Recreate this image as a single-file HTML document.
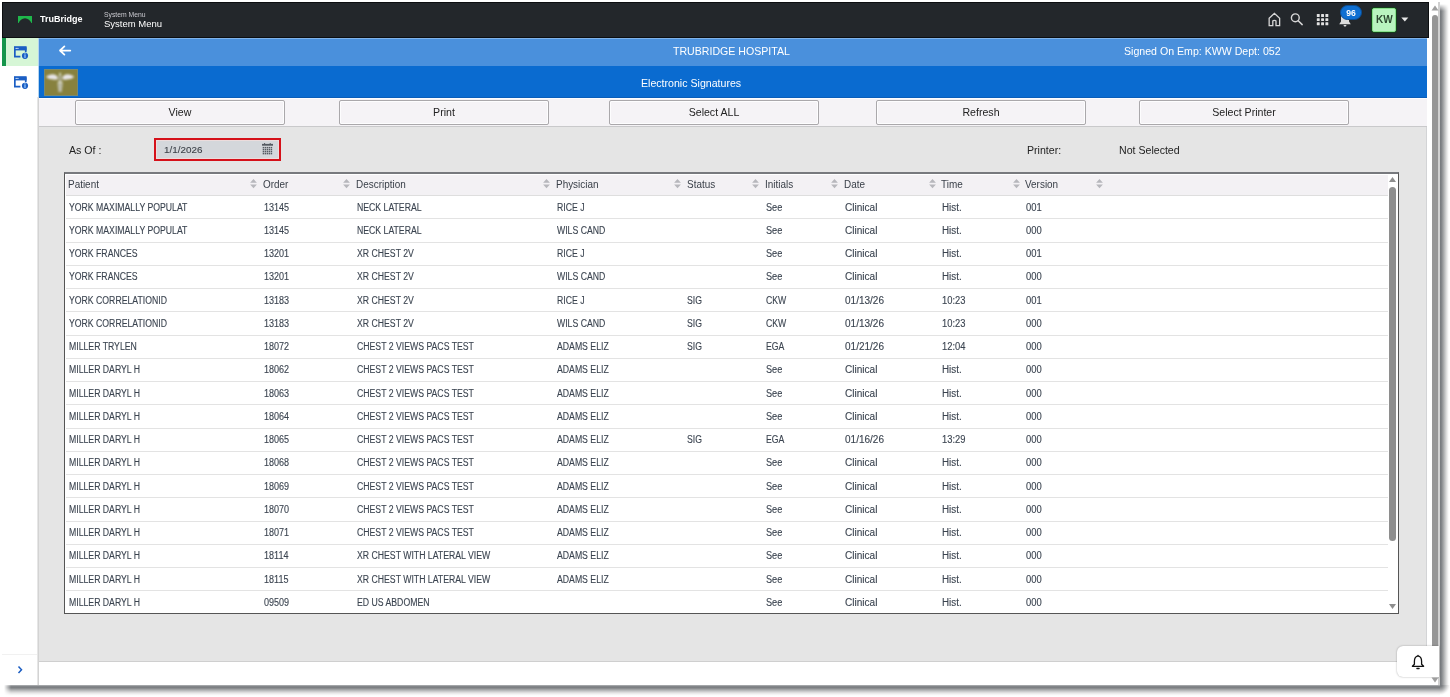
<!DOCTYPE html>
<html><head><meta charset="utf-8">
<style>
*{box-sizing:border-box;margin:0;padding:0}
html,body{width:1450px;height:697px;overflow:hidden;background:#fff;font-family:"Liberation Sans",sans-serif}
body{will-change:transform}
div,span,svg{position:absolute}
#win{left:2px;top:2px;width:1438px;height:683px;background:#fff}
#shr{left:1440px;top:4px;width:10px;height:681px;background:linear-gradient(to right,#76797d 0px,#7d8084 1.2px,#9c9ea0 3px,#c2c3c4 5px,#e6e6e6 7px,#fafafa 8.5px,#fff 9.5px);-webkit-mask-image:linear-gradient(to bottom,transparent 0px,#000 7px)}
#shb{left:4px;top:685px;width:1436px;height:12px;background:linear-gradient(to bottom,#b8babc 0px,#8e9194 1px,#76797d 2px,#85888b 3.2px,#9c9ea0 4.2px,#c2c3c4 6px,#e6e6e6 8px,#fafafa 10px,#fff 11px);-webkit-mask-image:linear-gradient(to right,transparent 0px,#000 7px)}
#shc{left:1440px;top:685px;width:10px;height:12px;background:radial-gradient(circle at 0 0,#76797d 0px,#7d8084 2px,#9c9ea0 4px,#c2c3c4 6px,#e6e6e6 8px,#fafafa 9.5px,#fff 10.5px)}
#hdr{left:2px;top:2px;width:1427px;height:36px;background:#23272b;border:1px solid #0c0e10}
#side{left:2px;top:38px;width:37px;height:647px;background:#fff;border-right:1px solid #d3d3d3}
#sl2{left:37px;top:97px;width:1px;height:588px;background:#e6e6e6}
#sl3{left:38px;top:38px;width:1px;height:59px;background:#b4d4f0}
#sline{left:2px;top:654px;width:35px;height:1px;background:#f1f1f1}
#act{left:2px;top:38px;width:36px;height:28px;background:#d6f6d6;border-left:4px solid #15954b}
#main{left:39px;top:38px;width:1388px;height:624px;background:#e5e5e5;border-bottom:1px solid #cfcfcf;border-right:1px solid #d3d4d6}
#bar1{left:39px;top:38px;width:1388px;height:28px;background:#4a90dc;border-top:1px solid #7fb3ea}
#bar2{left:39px;top:66px;width:1388px;height:32px;background:#0a6bd0;border-bottom:1px solid #0a5db8}
#tb{left:39px;top:98px;width:1388px;height:29px;background:#f5f3f6;border-top:1px solid #fdfdff;border-bottom:1px solid #c9c9cb}
.btn{top:100px;height:25px;width:210px;border:1px solid #aaa8ab;border-radius:2px;background:#f5f3f6;box-shadow:inset 0 0 0 1px #fdfdfe;font-size:10.6px;color:#222;text-align:center;line-height:23px}
.w{color:#fff;font-size:10.6px;white-space:nowrap;line-height:12px}
.lbl{font-size:10.6px;color:#222;white-space:nowrap;line-height:12px}
#date{left:154px;top:138px;width:127px;height:23px;border:2.6px solid #d5111a;background:#d4d7db;box-shadow:inset 0 0 0 1px #ecdcdc}
#datetxt{left:164px;top:143.7px;font-size:9.5px;color:#3a3f46;line-height:12px;transform:scaleX(1.04);transform-origin:0 0;-webkit-text-stroke:.1px #3a3f46}
#tbl{left:64px;top:172px;width:1335px;height:442px;border:1px solid #555;border-width:2px 1px 1px 1px;border-top-color:#77797d;background:#fff}
#th{left:66px;top:175px;width:1322px;height:21px;background:#f3f1f4;border-bottom:1px solid #dedede}
.hc{top:177.8px;line-height:14px;font-size:10.3px;color:#3a4049;white-space:nowrap;transform:scaleX(.965);transform-origin:0 0}
.rl{left:66px;width:1322px;height:1px;background:#e3e3e3}
.c{line-height:22px;font-size:10.0px;color:#3b4450;white-space:nowrap;transform-origin:0 50%;-webkit-text-stroke:.12px #3b4450}
#sb{left:1430px;top:2px;width:10px;height:683px;background:#fff;border-right:2px solid #d0d0d0}
#sbt{left:1432px;top:15px;width:6px;height:640px;background:#969696;border-radius:3px}
#isbt{left:1389px;top:187px;width:7px;height:354px;background:#8e8e8e;border-radius:3.5px}
#bellw{left:1397px;top:646px;width:42px;height:31px;background:#fff;border-radius:6px 0 0 6px;box-shadow:0 0 2px rgba(0,0,0,.35)}
</style></head><body>
<div id="win"></div>
<div id="shr"></div>
<div id="shb"></div>
<div id="shc"></div>
<div id="hdr"></div>
<div id="side"></div>
<div id="sline"></div>
<div id="sl2"></div>
<div id="sl3"></div>
<div id="act"></div>
<div id="main"></div>
<div id="bar1"></div>
<div id="bar2"></div>
<div id="tb"></div>
<div id="sb"></div>
<div id="sbt"></div>
<svg style="left:1431px;top:5px" width="8" height="6" viewBox="0 0 8 6"><path d="M4 0.5 L7.5 5.5 L0.5 5.5Z" fill="#a0a0a0"/></svg>
<svg style="left:1431px;top:677px" width="8" height="6" viewBox="0 0 8 6"><path d="M0.5 0.5 L7.5 0.5 L4 5.5Z" fill="#a0a0a0"/></svg>

<!-- header content -->
<svg style="left:17px;top:15px" width="16" height="9" viewBox="0 0 16 9"><path d="M1 1 H15 V8 H14.4 C13.4 5.2 11 3.4 8 3.2 C5 3.4 2.6 5.2 1.6 8 H1Z" fill="#1fb84b"/></svg>
<div style="left:40px;top:13px;font-size:9.7px;font-weight:bold;color:#fff;white-space:nowrap;line-height:12px;transform:scaleX(.93);transform-origin:0 0">TruBridge</div>
<div style="left:104px;top:10.5px;font-size:6.8px;color:#c9c9cf;white-space:nowrap;line-height:8px">System Menu</div>
<div style="left:104px;top:17.5px;font-size:9.5px;color:#fff;white-space:nowrap;line-height:11px">System Menu</div>
<svg style="left:1268px;top:12px" width="14" height="16" viewBox="0 0 14 16"><path d="M1.15 6.3 L6.4 1.3 L11.65 6.3 V13.6 H8 V8.9 C7.5 8.2 5.3 8.2 4.8 8.9 V13.6 H1.15Z" fill="none" stroke="#d6d6d6" stroke-width="1.3" stroke-linejoin="miter"/></svg>
<svg style="left:1289px;top:12px" width="15" height="15" viewBox="0 0 15 15"><circle cx="6.3" cy="5.8" r="3.9" fill="none" stroke="#d6d6d6" stroke-width="1.4"/><path d="M9.2 8.8 L13.2 12.6" stroke="#d6d6d6" stroke-width="1.5" stroke-linecap="round"/></svg>
<svg style="left:1316px;top:13px" width="13" height="13" viewBox="0 0 13 13"><g fill="#e2e2e2"><rect x="0.8" y="1" width="2.9" height="2.9" rx=".5"/><rect x="5.1" y="1" width="2.9" height="2.9" rx=".5"/><rect x="9.4" y="1" width="2.9" height="2.9" rx=".5"/><rect x="0.8" y="5.2" width="2.9" height="2.9" rx=".5"/><rect x="5.1" y="5.2" width="2.9" height="2.9" rx=".5"/><rect x="9.4" y="5.2" width="2.9" height="2.9" rx=".5"/><rect x="0.8" y="9.3" width="2.9" height="2.9" rx=".5"/><rect x="5.1" y="9.3" width="2.9" height="2.9" rx=".5"/><rect x="9.4" y="9.3" width="2.9" height="2.9" rx=".5"/></g></svg>
<svg style="left:1338px;top:12px" width="14" height="16" viewBox="0 0 14 16"><path d="M7 1.5 C4 1.5 3 4 3 6.5 V9.5 L1.2 12.3 H12.8 L11 9.5 V6.5 C11 4 10 1.5 7 1.5Z M5.6 13 H8.4 C8.4 14.2 7.8 14.6 7 14.6 C6.2 14.6 5.6 14.2 5.6 13Z" fill="#dcdcdc"/></svg>
<div style="left:1340px;top:5px;width:22px;height:15px;border-radius:7.5px;background:#0e6fd2;border:1px solid #0a4e96"></div>
<div style="left:1340px;top:7.8px;width:22px;text-align:center;font-size:8.6px;font-weight:bold;color:#fff;line-height:10px">96</div>
<div style="left:1372px;top:7.5px;width:24px;height:24px;background:#b9f4bf;border:1.5px solid #86e08a;border-radius:2px;box-shadow:0 0 0 1px #14401a"></div>
<div style="left:1372px;top:13.5px;width:24.5px;text-align:center;font-size:10px;font-weight:bold;color:#2d4a31;line-height:12px">KW</div>
<svg style="left:1400px;top:16px" width="10" height="7" viewBox="0 0 10 7"><path d="M1.3 1.6 H8.3 L4.8 5.6Z" fill="#e8e8e8"/></svg>

<!-- sidebar icons -->
<svg style="left:13px;top:46px" width="16" height="15" viewBox="0 0 16 15"><path d="M12.75 1.2 V6.2 M1.85 1.2 V10.65 H7.4" fill="none" stroke="#1b5ec4" stroke-width="1.7"/><rect x="1" y="0.2" width="12.6" height="4.2" fill="#1b5ec4"/><circle cx="3.2" cy="2.4" r=".65" fill="#e6f3ff"/><circle cx="4.9" cy="2.4" r=".65" fill="#e6f3ff"/><circle cx="12" cy="9.8" r="3.1" fill="#1b5ec4"/><rect x="11.45" y="8.4" width="1.1" height="3.6" fill="#9fd0ff"/><circle cx="12" cy="7.6" r=".55" fill="#9fd0ff"/></svg>
<svg style="left:13px;top:76px" width="16" height="15" viewBox="0 0 16 15"><path d="M12.75 1.2 V6.2 M1.85 1.2 V10.65 H7.4" fill="none" stroke="#1b5ec4" stroke-width="1.7"/><rect x="1" y="0.2" width="12.6" height="4.2" fill="#1b5ec4"/><circle cx="3.2" cy="2.4" r=".65" fill="#e6f3ff"/><circle cx="4.9" cy="2.4" r=".65" fill="#e6f3ff"/><circle cx="12" cy="9.8" r="3.1" fill="#1b5ec4"/><rect x="11.45" y="8.4" width="1.1" height="3.6" fill="#9fd0ff"/><circle cx="12" cy="7.6" r=".55" fill="#9fd0ff"/></svg>
<svg style="left:16px;top:664px" width="8" height="11" viewBox="0 0 8 11"><path d="M2.5 2.5 L5.5 5.7 L2.5 8.9" fill="none" stroke="#1a5cc2" stroke-width="1.5"/></svg>

<!-- blue bars content -->
<svg style="left:57px;top:43px" width="16" height="15" viewBox="0 0 16 15"><path d="M7.4 3.4 L3 7.5 L7.4 11.6 M3.5 7.5 H13.3" fill="none" stroke="#fff" stroke-width="1.75" stroke-linecap="round" stroke-linejoin="round"/></svg>
<div class="w" style="left:673px;top:45px">TRUBRIDGE HOSPITAL</div>
<div class="w" style="left:1124px;top:45px">Signed On Emp: KWW Dept: 052</div>
<div style="left:44px;top:69px;width:34px;height:27px;background:#87813e;border:1px solid #788a72"></div>
<svg style="left:44px;top:69px" width="34" height="27" viewBox="0 0 34 27"><defs><filter id="bl" x="-20%" y="-20%" width="140%" height="140%"><feGaussianBlur stdDeviation="0.85"/></filter></defs><g filter="url(#bl)"><path d="M2 8 C4 6.2 7 5.2 9.6 5.4 C11.8 5.7 13.4 6.8 13.6 8.3 L13.6 10.6 C10 11 5 10.3 2 8Z" fill="#e8e6ea"/><path d="M30.2 8 C28.2 6.2 25.2 5.2 22.6 5.4 C20.4 5.7 18.8 6.8 18.6 8.3 L18.6 10.6 C22.2 11 27.2 10.3 30.2 8Z" fill="#e8e6ea"/><ellipse cx="16.1" cy="5" rx="1.1" ry="1.3" fill="#d6dcbc"/><rect x="14.7" y="6" width="2.8" height="7" fill="#aeae96"/><ellipse cx="16.1" cy="13.6" rx="2.7" ry="1" fill="#e2e2d2"/><path d="M13.4 14.6 L18.8 14.6 L17.7 22.9 L14.5 22.9Z" fill="#bcbcaa"/></g></svg>
<div class="w" style="left:641px;top:77px">Electronic Signatures</div>

<!-- buttons -->
<div class="btn" style="left:75px">View</div>
<div class="btn" style="left:339px">Print</div>
<div class="btn" style="left:609px">Select ALL</div>
<div class="btn" style="left:876px">Refresh</div>
<div class="btn" style="left:1139px">Select Printer</div>

<!-- labels -->
<div class="lbl" style="left:69px;top:144px">As Of :</div>
<div id="date"></div>
<div id="datetxt">1/1/2026</div>
<svg style="left:262px;top:142px" width="12" height="14" viewBox="0 0 12 14"><g fill="#555a62"><rect x="0" y="1.9" width="11" height="1.8"/><rect x="2.1" y="1" width="1" height="1.2"/><rect x="7.7" y="1" width="1" height="1.2"/><rect x="0.7" y="4.9" width="1.45" height="1.45"/><rect x="0.7" y="6.9" width="1.45" height="1.45"/><rect x="0.7" y="8.9" width="1.45" height="1.45"/><rect x="0.7" y="10.9" width="1.45" height="1.45"/><rect x="2.7" y="4.9" width="1.45" height="1.45"/><rect x="2.7" y="6.9" width="1.45" height="1.45"/><rect x="2.7" y="8.9" width="1.45" height="1.45"/><rect x="2.7" y="10.9" width="1.45" height="1.45"/><rect x="4.7" y="4.9" width="1.45" height="1.45"/><rect x="4.7" y="6.9" width="1.45" height="1.45"/><rect x="4.7" y="8.9" width="1.45" height="1.45"/><rect x="4.7" y="10.9" width="1.45" height="1.45"/><rect x="6.7" y="4.9" width="1.45" height="1.45"/><rect x="6.7" y="6.9" width="1.45" height="1.45"/><rect x="6.7" y="8.9" width="1.45" height="1.45"/><rect x="6.7" y="10.9" width="1.45" height="1.45"/><rect x="8.7" y="4.9" width="1.45" height="1.45"/><rect x="8.7" y="6.9" width="1.45" height="1.45"/><rect x="8.7" y="8.9" width="1.45" height="1.45"/><rect x="8.7" y="10.9" width="1.45" height="1.45"/></g></svg>
<div class="lbl" style="left:1027px;top:144px">Printer:</div>
<div class="lbl" style="left:1119px;top:144px">Not Selected</div>

<!-- table -->
<div id="tbl"></div>
<div id="th"></div>
<div class="hc" style="left:68.2px">Patient</div>
<div class="hc" style="left:262.8px">Order</div>
<div class="hc" style="left:356.2px">Description</div>
<div class="hc" style="left:555.9px">Physician</div>
<div class="hc" style="left:686.5px">Status</div>
<div class="hc" style="left:765.1px">Initials</div>
<div class="hc" style="left:843.7px">Date</div>
<div class="hc" style="left:941.4px">Time</div>
<div class="hc" style="left:1024.9px">Version</div>
<svg class="si" style="left:250.3px;top:178px" width="7" height="11" viewBox="0 0 7 11"><path d="M3.5 1.1 L6.9 4.8 L0.1 4.8Z M0.1 6.5 L6.9 6.5 L3.5 10.3Z" fill="#b7b7bc"/></svg>
<svg class="si" style="left:343.4px;top:178px" width="7" height="11" viewBox="0 0 7 11"><path d="M3.5 1.1 L6.9 4.8 L0.1 4.8Z M0.1 6.5 L6.9 6.5 L3.5 10.3Z" fill="#b7b7bc"/></svg>
<svg class="si" style="left:543.2px;top:178px" width="7" height="11" viewBox="0 0 7 11"><path d="M3.5 1.1 L6.9 4.8 L0.1 4.8Z M0.1 6.5 L6.9 6.5 L3.5 10.3Z" fill="#b7b7bc"/></svg>
<svg class="si" style="left:673.5px;top:178px" width="7" height="11" viewBox="0 0 7 11"><path d="M3.5 1.1 L6.9 4.8 L0.1 4.8Z M0.1 6.5 L6.9 6.5 L3.5 10.3Z" fill="#b7b7bc"/></svg>
<svg class="si" style="left:752.2px;top:178px" width="7" height="11" viewBox="0 0 7 11"><path d="M3.5 1.1 L6.9 4.8 L0.1 4.8Z M0.1 6.5 L6.9 6.5 L3.5 10.3Z" fill="#b7b7bc"/></svg>
<svg class="si" style="left:831.2px;top:178px" width="7" height="11" viewBox="0 0 7 11"><path d="M3.5 1.1 L6.9 4.8 L0.1 4.8Z M0.1 6.5 L6.9 6.5 L3.5 10.3Z" fill="#b7b7bc"/></svg>
<svg class="si" style="left:928.6px;top:178px" width="7" height="11" viewBox="0 0 7 11"><path d="M3.5 1.1 L6.9 4.8 L0.1 4.8Z M0.1 6.5 L6.9 6.5 L3.5 10.3Z" fill="#b7b7bc"/></svg>
<svg class="si" style="left:1012.6px;top:178px" width="7" height="11" viewBox="0 0 7 11"><path d="M3.5 1.1 L6.9 4.8 L0.1 4.8Z M0.1 6.5 L6.9 6.5 L3.5 10.3Z" fill="#b7b7bc"/></svg>
<svg class="si" style="left:1096.1px;top:178px" width="7" height="11" viewBox="0 0 7 11"><path d="M3.5 1.1 L6.9 4.8 L0.1 4.8Z M0.1 6.5 L6.9 6.5 L3.5 10.3Z" fill="#b7b7bc"/></svg>
<div class="rl" style="top:218.45px"></div>
<div class="rl" style="top:241.70px"></div>
<div class="rl" style="top:264.95px"></div>
<div class="rl" style="top:288.20px"></div>
<div class="rl" style="top:311.45px"></div>
<div class="rl" style="top:334.70px"></div>
<div class="rl" style="top:357.95px"></div>
<div class="rl" style="top:381.20px"></div>
<div class="rl" style="top:404.45px"></div>
<div class="rl" style="top:427.70px"></div>
<div class="rl" style="top:450.95px"></div>
<div class="rl" style="top:474.20px"></div>
<div class="rl" style="top:497.45px"></div>
<div class="rl" style="top:520.70px"></div>
<div class="rl" style="top:543.95px"></div>
<div class="rl" style="top:567.20px"></div>
<div class="rl" style="top:590.45px"></div>
<div class="c" style="left:69px;top:196.50px;transform:scaleX(0.8695)">YORK MAXIMALLY POPULAT</div>
<div class="c" style="left:263.6px;top:196.50px;transform:scaleX(0.9024)">13145</div>
<div class="c" style="left:357px;top:196.50px;transform:scaleX(0.8695)">NECK LATERAL</div>
<div class="c" style="left:556.7px;top:196.50px;transform:scaleX(0.8695)">RICE J</div>
<div class="c" style="left:765.9px;top:196.50px;transform:scaleX(0.9118)">See</div>
<div class="c" style="left:844.5px;top:196.50px;transform:scaleX(1.0058)">Clinical</div>
<div class="c" style="left:942.2px;top:196.50px;transform:scaleX(0.9823)">Hist.</div>
<div class="c" style="left:1025.7px;top:196.50px;transform:scaleX(0.94)">001</div>
<div class="c" style="left:69px;top:219.75px;transform:scaleX(0.8695)">YORK MAXIMALLY POPULAT</div>
<div class="c" style="left:263.6px;top:219.75px;transform:scaleX(0.9024)">13145</div>
<div class="c" style="left:357px;top:219.75px;transform:scaleX(0.8695)">NECK LATERAL</div>
<div class="c" style="left:556.7px;top:219.75px;transform:scaleX(0.8695)">WILS CAND</div>
<div class="c" style="left:765.9px;top:219.75px;transform:scaleX(0.9118)">See</div>
<div class="c" style="left:844.5px;top:219.75px;transform:scaleX(1.0058)">Clinical</div>
<div class="c" style="left:942.2px;top:219.75px;transform:scaleX(0.9823)">Hist.</div>
<div class="c" style="left:1025.7px;top:219.75px;transform:scaleX(0.94)">000</div>
<div class="c" style="left:69px;top:243.00px;transform:scaleX(0.8695)">YORK FRANCES</div>
<div class="c" style="left:263.6px;top:243.00px;transform:scaleX(0.9024)">13201</div>
<div class="c" style="left:357px;top:243.00px;transform:scaleX(0.8695)">XR CHEST 2V</div>
<div class="c" style="left:556.7px;top:243.00px;transform:scaleX(0.8695)">RICE J</div>
<div class="c" style="left:765.9px;top:243.00px;transform:scaleX(0.9118)">See</div>
<div class="c" style="left:844.5px;top:243.00px;transform:scaleX(1.0058)">Clinical</div>
<div class="c" style="left:942.2px;top:243.00px;transform:scaleX(0.9823)">Hist.</div>
<div class="c" style="left:1025.7px;top:243.00px;transform:scaleX(0.94)">001</div>
<div class="c" style="left:69px;top:266.25px;transform:scaleX(0.8695)">YORK FRANCES</div>
<div class="c" style="left:263.6px;top:266.25px;transform:scaleX(0.9024)">13201</div>
<div class="c" style="left:357px;top:266.25px;transform:scaleX(0.8695)">XR CHEST 2V</div>
<div class="c" style="left:556.7px;top:266.25px;transform:scaleX(0.8695)">WILS CAND</div>
<div class="c" style="left:765.9px;top:266.25px;transform:scaleX(0.9118)">See</div>
<div class="c" style="left:844.5px;top:266.25px;transform:scaleX(1.0058)">Clinical</div>
<div class="c" style="left:942.2px;top:266.25px;transform:scaleX(0.9823)">Hist.</div>
<div class="c" style="left:1025.7px;top:266.25px;transform:scaleX(0.94)">000</div>
<div class="c" style="left:69px;top:289.50px;transform:scaleX(0.8695)">YORK CORRELATIONID</div>
<div class="c" style="left:263.6px;top:289.50px;transform:scaleX(0.9024)">13183</div>
<div class="c" style="left:357px;top:289.50px;transform:scaleX(0.8695)">XR CHEST 2V</div>
<div class="c" style="left:556.7px;top:289.50px;transform:scaleX(0.8695)">RICE J</div>
<div class="c" style="left:687.3px;top:289.50px;transform:scaleX(0.8695)">SIG</div>
<div class="c" style="left:765.9px;top:289.50px;transform:scaleX(0.8695)">CKW</div>
<div class="c" style="left:844.5px;top:289.50px;transform:scaleX(1.0011)">01/13/26</div>
<div class="c" style="left:942.2px;top:289.50px;transform:scaleX(0.9353)">10:23</div>
<div class="c" style="left:1025.7px;top:289.50px;transform:scaleX(0.94)">001</div>
<div class="c" style="left:69px;top:312.75px;transform:scaleX(0.8695)">YORK CORRELATIONID</div>
<div class="c" style="left:263.6px;top:312.75px;transform:scaleX(0.9024)">13183</div>
<div class="c" style="left:357px;top:312.75px;transform:scaleX(0.8695)">XR CHEST 2V</div>
<div class="c" style="left:556.7px;top:312.75px;transform:scaleX(0.8695)">WILS CAND</div>
<div class="c" style="left:687.3px;top:312.75px;transform:scaleX(0.8695)">SIG</div>
<div class="c" style="left:765.9px;top:312.75px;transform:scaleX(0.8695)">CKW</div>
<div class="c" style="left:844.5px;top:312.75px;transform:scaleX(1.0011)">01/13/26</div>
<div class="c" style="left:942.2px;top:312.75px;transform:scaleX(0.9353)">10:23</div>
<div class="c" style="left:1025.7px;top:312.75px;transform:scaleX(0.94)">000</div>
<div class="c" style="left:69px;top:336.00px;transform:scaleX(0.8695)">MILLER TRYLEN</div>
<div class="c" style="left:263.6px;top:336.00px;transform:scaleX(0.9024)">18072</div>
<div class="c" style="left:357px;top:336.00px;transform:scaleX(0.8695)">CHEST 2 VIEWS PACS TEST</div>
<div class="c" style="left:556.7px;top:336.00px;transform:scaleX(0.8695)">ADAMS ELIZ</div>
<div class="c" style="left:687.3px;top:336.00px;transform:scaleX(0.8695)">SIG</div>
<div class="c" style="left:765.9px;top:336.00px;transform:scaleX(0.8695)">EGA</div>
<div class="c" style="left:844.5px;top:336.00px;transform:scaleX(1.0011)">01/21/26</div>
<div class="c" style="left:942.2px;top:336.00px;transform:scaleX(0.9353)">12:04</div>
<div class="c" style="left:1025.7px;top:336.00px;transform:scaleX(0.94)">000</div>
<div class="c" style="left:69px;top:359.25px;transform:scaleX(0.8695)">MILLER DARYL H</div>
<div class="c" style="left:263.6px;top:359.25px;transform:scaleX(0.9024)">18062</div>
<div class="c" style="left:357px;top:359.25px;transform:scaleX(0.8695)">CHEST 2 VIEWS PACS TEST</div>
<div class="c" style="left:556.7px;top:359.25px;transform:scaleX(0.8695)">ADAMS ELIZ</div>
<div class="c" style="left:765.9px;top:359.25px;transform:scaleX(0.9118)">See</div>
<div class="c" style="left:844.5px;top:359.25px;transform:scaleX(1.0058)">Clinical</div>
<div class="c" style="left:942.2px;top:359.25px;transform:scaleX(0.9823)">Hist.</div>
<div class="c" style="left:1025.7px;top:359.25px;transform:scaleX(0.94)">000</div>
<div class="c" style="left:69px;top:382.50px;transform:scaleX(0.8695)">MILLER DARYL H</div>
<div class="c" style="left:263.6px;top:382.50px;transform:scaleX(0.9024)">18063</div>
<div class="c" style="left:357px;top:382.50px;transform:scaleX(0.8695)">CHEST 2 VIEWS PACS TEST</div>
<div class="c" style="left:556.7px;top:382.50px;transform:scaleX(0.8695)">ADAMS ELIZ</div>
<div class="c" style="left:765.9px;top:382.50px;transform:scaleX(0.9118)">See</div>
<div class="c" style="left:844.5px;top:382.50px;transform:scaleX(1.0058)">Clinical</div>
<div class="c" style="left:942.2px;top:382.50px;transform:scaleX(0.9823)">Hist.</div>
<div class="c" style="left:1025.7px;top:382.50px;transform:scaleX(0.94)">000</div>
<div class="c" style="left:69px;top:405.75px;transform:scaleX(0.8695)">MILLER DARYL H</div>
<div class="c" style="left:263.6px;top:405.75px;transform:scaleX(0.9024)">18064</div>
<div class="c" style="left:357px;top:405.75px;transform:scaleX(0.8695)">CHEST 2 VIEWS PACS TEST</div>
<div class="c" style="left:556.7px;top:405.75px;transform:scaleX(0.8695)">ADAMS ELIZ</div>
<div class="c" style="left:765.9px;top:405.75px;transform:scaleX(0.9118)">See</div>
<div class="c" style="left:844.5px;top:405.75px;transform:scaleX(1.0058)">Clinical</div>
<div class="c" style="left:942.2px;top:405.75px;transform:scaleX(0.9823)">Hist.</div>
<div class="c" style="left:1025.7px;top:405.75px;transform:scaleX(0.94)">000</div>
<div class="c" style="left:69px;top:429.00px;transform:scaleX(0.8695)">MILLER DARYL H</div>
<div class="c" style="left:263.6px;top:429.00px;transform:scaleX(0.9024)">18065</div>
<div class="c" style="left:357px;top:429.00px;transform:scaleX(0.8695)">CHEST 2 VIEWS PACS TEST</div>
<div class="c" style="left:556.7px;top:429.00px;transform:scaleX(0.8695)">ADAMS ELIZ</div>
<div class="c" style="left:687.3px;top:429.00px;transform:scaleX(0.8695)">SIG</div>
<div class="c" style="left:765.9px;top:429.00px;transform:scaleX(0.8695)">EGA</div>
<div class="c" style="left:844.5px;top:429.00px;transform:scaleX(1.0011)">01/16/26</div>
<div class="c" style="left:942.2px;top:429.00px;transform:scaleX(0.9353)">13:29</div>
<div class="c" style="left:1025.7px;top:429.00px;transform:scaleX(0.94)">000</div>
<div class="c" style="left:69px;top:452.25px;transform:scaleX(0.8695)">MILLER DARYL H</div>
<div class="c" style="left:263.6px;top:452.25px;transform:scaleX(0.9024)">18068</div>
<div class="c" style="left:357px;top:452.25px;transform:scaleX(0.8695)">CHEST 2 VIEWS PACS TEST</div>
<div class="c" style="left:556.7px;top:452.25px;transform:scaleX(0.8695)">ADAMS ELIZ</div>
<div class="c" style="left:765.9px;top:452.25px;transform:scaleX(0.9118)">See</div>
<div class="c" style="left:844.5px;top:452.25px;transform:scaleX(1.0058)">Clinical</div>
<div class="c" style="left:942.2px;top:452.25px;transform:scaleX(0.9823)">Hist.</div>
<div class="c" style="left:1025.7px;top:452.25px;transform:scaleX(0.94)">000</div>
<div class="c" style="left:69px;top:475.50px;transform:scaleX(0.8695)">MILLER DARYL H</div>
<div class="c" style="left:263.6px;top:475.50px;transform:scaleX(0.9024)">18069</div>
<div class="c" style="left:357px;top:475.50px;transform:scaleX(0.8695)">CHEST 2 VIEWS PACS TEST</div>
<div class="c" style="left:556.7px;top:475.50px;transform:scaleX(0.8695)">ADAMS ELIZ</div>
<div class="c" style="left:765.9px;top:475.50px;transform:scaleX(0.9118)">See</div>
<div class="c" style="left:844.5px;top:475.50px;transform:scaleX(1.0058)">Clinical</div>
<div class="c" style="left:942.2px;top:475.50px;transform:scaleX(0.9823)">Hist.</div>
<div class="c" style="left:1025.7px;top:475.50px;transform:scaleX(0.94)">000</div>
<div class="c" style="left:69px;top:498.75px;transform:scaleX(0.8695)">MILLER DARYL H</div>
<div class="c" style="left:263.6px;top:498.75px;transform:scaleX(0.9024)">18070</div>
<div class="c" style="left:357px;top:498.75px;transform:scaleX(0.8695)">CHEST 2 VIEWS PACS TEST</div>
<div class="c" style="left:556.7px;top:498.75px;transform:scaleX(0.8695)">ADAMS ELIZ</div>
<div class="c" style="left:765.9px;top:498.75px;transform:scaleX(0.9118)">See</div>
<div class="c" style="left:844.5px;top:498.75px;transform:scaleX(1.0058)">Clinical</div>
<div class="c" style="left:942.2px;top:498.75px;transform:scaleX(0.9823)">Hist.</div>
<div class="c" style="left:1025.7px;top:498.75px;transform:scaleX(0.94)">000</div>
<div class="c" style="left:69px;top:522.00px;transform:scaleX(0.8695)">MILLER DARYL H</div>
<div class="c" style="left:263.6px;top:522.00px;transform:scaleX(0.9024)">18071</div>
<div class="c" style="left:357px;top:522.00px;transform:scaleX(0.8695)">CHEST 2 VIEWS PACS TEST</div>
<div class="c" style="left:556.7px;top:522.00px;transform:scaleX(0.8695)">ADAMS ELIZ</div>
<div class="c" style="left:765.9px;top:522.00px;transform:scaleX(0.9118)">See</div>
<div class="c" style="left:844.5px;top:522.00px;transform:scaleX(1.0058)">Clinical</div>
<div class="c" style="left:942.2px;top:522.00px;transform:scaleX(0.9823)">Hist.</div>
<div class="c" style="left:1025.7px;top:522.00px;transform:scaleX(0.94)">000</div>
<div class="c" style="left:69px;top:545.25px;transform:scaleX(0.8695)">MILLER DARYL H</div>
<div class="c" style="left:263.6px;top:545.25px;transform:scaleX(0.9024)">18114</div>
<div class="c" style="left:357px;top:545.25px;transform:scaleX(0.8695)">XR CHEST WITH LATERAL VIEW</div>
<div class="c" style="left:556.7px;top:545.25px;transform:scaleX(0.8695)">ADAMS ELIZ</div>
<div class="c" style="left:765.9px;top:545.25px;transform:scaleX(0.9118)">See</div>
<div class="c" style="left:844.5px;top:545.25px;transform:scaleX(1.0058)">Clinical</div>
<div class="c" style="left:942.2px;top:545.25px;transform:scaleX(0.9823)">Hist.</div>
<div class="c" style="left:1025.7px;top:545.25px;transform:scaleX(0.94)">000</div>
<div class="c" style="left:69px;top:568.50px;transform:scaleX(0.8695)">MILLER DARYL H</div>
<div class="c" style="left:263.6px;top:568.50px;transform:scaleX(0.9024)">18115</div>
<div class="c" style="left:357px;top:568.50px;transform:scaleX(0.8695)">XR CHEST WITH LATERAL VIEW</div>
<div class="c" style="left:556.7px;top:568.50px;transform:scaleX(0.8695)">ADAMS ELIZ</div>
<div class="c" style="left:765.9px;top:568.50px;transform:scaleX(0.9118)">See</div>
<div class="c" style="left:844.5px;top:568.50px;transform:scaleX(1.0058)">Clinical</div>
<div class="c" style="left:942.2px;top:568.50px;transform:scaleX(0.9823)">Hist.</div>
<div class="c" style="left:1025.7px;top:568.50px;transform:scaleX(0.94)">000</div>
<div class="c" style="left:69px;top:591.75px;transform:scaleX(0.8695)">MILLER DARYL H</div>
<div class="c" style="left:263.6px;top:591.75px;transform:scaleX(0.9024)">09509</div>
<div class="c" style="left:357px;top:591.75px;transform:scaleX(0.8695)">ED US ABDOMEN</div>
<div class="c" style="left:765.9px;top:591.75px;transform:scaleX(0.9118)">See</div>
<div class="c" style="left:844.5px;top:591.75px;transform:scaleX(1.0058)">Clinical</div>
<div class="c" style="left:942.2px;top:591.75px;transform:scaleX(0.9823)">Hist.</div>
<div class="c" style="left:1025.7px;top:591.75px;transform:scaleX(0.94)">000</div>
<div id="isbt"></div>
<svg style="left:1388px;top:176px" width="9" height="7" viewBox="0 0 9 7"><path d="M4.5 1 L8 6 L1 6Z" fill="#8e8e8e"/></svg>
<svg style="left:1388px;top:603px" width="9" height="7" viewBox="0 0 9 7"><path d="M1 1 L8 1 L4.5 6Z" fill="#8e8e8e"/></svg>

<div id="bellw"></div>
<svg style="left:1410px;top:653px" width="16" height="18" viewBox="0 0 16 18"><path d="M7.1 3.2 L8 1.4 L8.9 3.2Z" fill="#111"/><path d="M8 2.9 C5.4 3.3 4.4 5.6 4.4 8.6 V11.2 L2.4 13.3 H13.6 L11.6 11.2 V8.6 C11.6 5.6 10.6 3.3 8 2.9Z" fill="none" stroke="#111" stroke-width="1.3" stroke-linejoin="round"/><path d="M6.9 15.5 H9.1" stroke="#111" stroke-width="1.3" stroke-linecap="round"/></svg>
</body></html>
